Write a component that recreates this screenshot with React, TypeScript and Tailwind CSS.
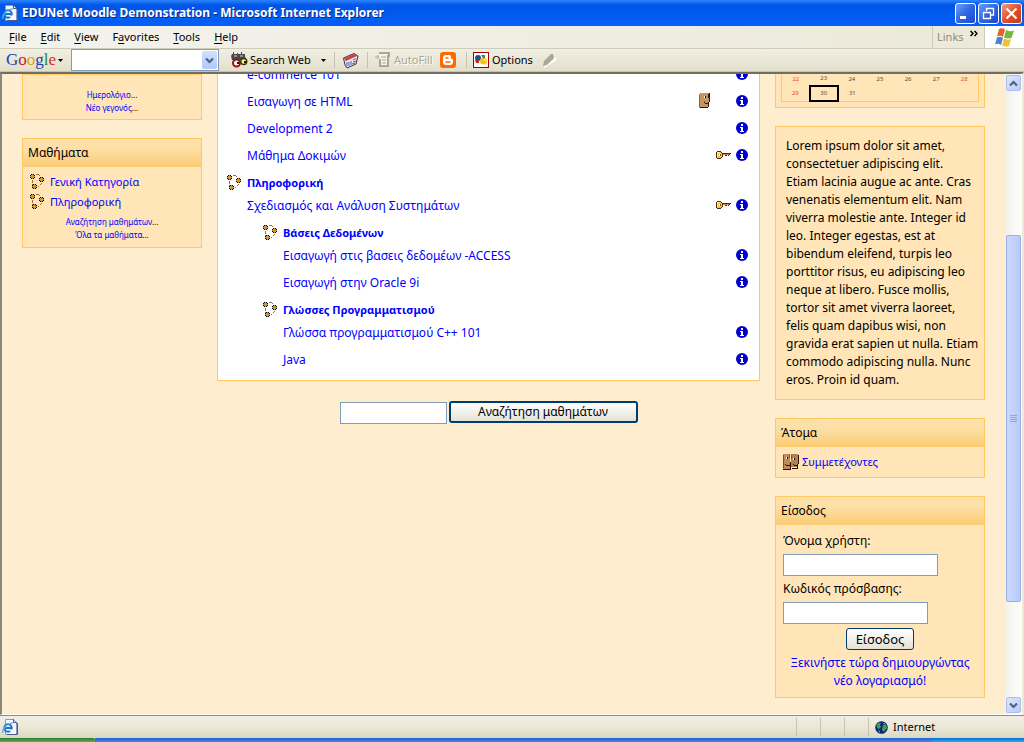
import React from "react";

const INFO = "i";
const KEY = "k";
const FACE = "f";

type Row = { title: string; level: number; category?: boolean; marks?: string };

const rows: Row[] = [
  { title: "e-commerce 101", level: 0, marks: INFO },
  { title: "Εισαγωγη σε HTML", level: 0, marks: FACE + INFO },
  { title: "Development 2", level: 0, marks: INFO },
  { title: "Μάθημα Δοκιμών", level: 0, marks: KEY + INFO },
  { title: "Πληροφορική", level: 0, category: true },
  { title: "Σχεδιασμός και Ανάλυση Συστημάτων", level: 0, marks: KEY + INFO },
  { title: "Βάσεις Δεδομένων", level: 1, category: true },
  { title: "Εισαγωγή στις βασεις δεδομέων -ACCESS", level: 1, marks: INFO },
  { title: "Εισαγωγή στην Oracle 9i", level: 1, marks: INFO },
  { title: "Γλώσσες Προγραμματισμού", level: 1, category: true },
  { title: "Γλώσσα προγραμματισμού C++ 101", level: 1, marks: INFO },
  { title: "Java", level: 1, marks: INFO },
];

const weeks = [
  ["22", "23", "24", "25", "26", "27", "28"],
  ["29", "30", "31", "", "", "", ""],
];

const intro = [
  "Lorem ipsum dolor sit amet,",
  "consectetuer adipiscing elit.",
  "Etiam lacinia augue ac ante. Cras",
  "venenatis elementum elit. Nam",
  "viverra molestie ante. Integer id",
  "leo. Integer egestas, est at",
  "bibendum eleifend, turpis leo",
  "porttitor risus, eu adipiscing leo",
  "neque at libero. Fusce mollis,",
  "tortor sit amet viverra laoreet,",
  "felis quam dapibus wisi, non",
  "gravida erat sapien ut nulla. Etiam",
  "commodo adipiscing nulla. Nunc",
  "eros. Proin id quam.",
].join("\n");

function CategoryIcon() {
  return (
    <svg width="16" height="16" viewBox="0 0 16 16" className="shrink-0" shapeRendering="crispEdges" aria-hidden="true">
      <path d="M6 0h3v1H6zM9 1h1v1H9zM2 6h1v3H2zM2 10h1v1H2zM11 9h1v1h-1zM10 10h1v1h-1zM8 12h1v1H8z" fill="#a06c3c" />
      {["translate(0 0)", "translate(9 3)", "translate(2 10)"].map((at) => (
        <g key={at} transform={at}>
          <path d="M1 0h3v1h1v3H4v1H1V4H0V1h1z" fill="#c8963c" />
          <path d="M1 0h1v1H1zM3 0h1v1H3zM0 1h1v1H0zM4 1h1v1H4zM0 3h1v1H0zM4 3h1v1H4zM1 4h1v1H1zM3 4h1v1H3z" fill="#000" />
        </g>
      ))}
    </svg>
  );
}

function InfoIcon() {
  return (
    <svg width="12" height="12" viewBox="0 0 12 12" aria-hidden="true">
      <circle cx="6" cy="6" r="6" fill="#0000cc" />
      <path d="M5 2h2v2H5zM4 5h3v4h1v1H4V9h1V6H4z" fill="#fff" />
    </svg>
  );
}

function KeyIcon() {
  return (
    <svg width="16" height="10" viewBox="0 0 16 10" shapeRendering="crispEdges" aria-hidden="true">
      <path d="M1 1h4v1h1v1h9v1h-1v1h-1v1h-1V5h-1v1H9V5H7v2H6v1H5v1H1V8H0V2h1z" fill="#4a2c0c" />
      <path d="M1 2h4v1h1v4H5v1H1z" fill="#edc052" />
      <path d="M1 2h3v1H1zM1 3h1v4H1z" fill="#fff0a8" />
      <path d="M3 4h1v2H3z" fill="#fff" />
      <path d="M4 4h1v2H4z" fill="#8a5a18" />
      <path d="M7 4h6v1H7z" fill="#c98648" />
    </svg>
  );
}

function FaceIcon() {
  return (
    <svg width="11" height="16" viewBox="0 0 11 16" shapeRendering="crispEdges" aria-hidden="true">
      <path d="M0 1h1V0h9v1h-1v4h1v4H9v5H8v1H0z" fill="#c99463" />
      <path d="M9 1h1v4H9zM10 0h1v9h-1zM9 9h1v5H9zM1 14h8v1H1zM5 9h1v1H5zM6 10h3v1H6z" fill="#2d180a" />
      <path d="M0 2h1v12H0zM5 8h1v1H5z" fill="#93623a" />
      <path d="M5 3h1v2H5z" fill="#fff" />
      <path d="M6 3h1v2H6z" fill="#000" />
    </svg>
  );
}

function PeopleIcon() {
  return (
    <svg width="16" height="16" viewBox="0 0 16 16" className="shrink-0" shapeRendering="crispEdges" aria-hidden="true">
      <path d="M0 0h7v15H0z" fill="#c08b5c" />
      <path d="M8 0h7v13H8z" fill="#b67f50" />
      <path d="M0 1h1v13H0zM6 0h1v4H6zM8 1h1v4H8z" fill="#7c4e2a" />
      <path d="M7 8h1v8H7zM15 1h1v9h-1zM14 10h1v5h-1zM9 14h5v1H9zM0 15h7v1H0zM3 11h4v1H3zM2 10h1v1H2zM10 10h1v1h-1zM11 11h3v1h-3z" fill="#281408" />
      <path d="M3 3h1v2H3zM10 4h1v2h-1z" fill="#fff" />
      <path d="M4 3h1v2H4zM11 4h1v2h-1z" fill="#000" />
    </svg>
  );
}

function IePageIcon() {
  return (
    <svg width="16" height="16" viewBox="0 0 16 16" className="shrink-0" aria-hidden="true">
      <path d="M3.500.5h8l3 3v12h-11z" fill="#f4f6ff" stroke="#8c99bd" />
      <path d="M11.500 0v3.500H15M15.500 4v11.500H5" fill="none" stroke="#4c587e" />
      <circle cx="6" cy="9" r="3.700" fill="none" stroke="#1673cc" strokeWidth="2" />
      <path d="M3 9h7" stroke="#1673cc" strokeWidth="2" />
      <path d="M7.500 10.500h3.500v2H8z" fill="#eef3ff" />
      <path d="M1 14C-.5 10 6 3.500 11 4" fill="none" stroke="#57b4ef" strokeWidth="1.300" />
    </svg>
  );
}

function Binoculars() {
  return (
    <svg width="17" height="16" viewBox="0 0 17 16" aria-hidden="true">
      <path d="M1 2h1V0h1v2h3V1h1v1h3V0h1v2h3v2l1 4H1L0 4z" fill="#4a4a4a" />
      <path d="M3 3h3v2H3zM9 3h3v2H9z" fill="#909090" />
      <circle cx="5.500" cy="11" r="3.500" fill="#fff" stroke="#a90c0c" strokeWidth="2" />
      <circle cx="12.800" cy="9.500" r="3" fill="#fff4a0" stroke="#3d3800" strokeWidth="1.400" />
      <path d="M6 10h2v2H6zM13 9h2v2h-2z" fill="#111" />
    </svg>
  );
}

function NewsIcon() {
  return (
    <svg width="18" height="17" viewBox="0 0 18 17" aria-hidden="true">
      <path d="M1.500 6L12 1.500 16 4l-2 8-9 4-2-3z" fill="#e9e5ef" stroke="#33305c" />
      <path d="M2 6.500l10-4.500 3 2-11 5z" fill="#cf4038" />
      <path d="M5 10v4M7 10v4M9 9v4" stroke="#4161bd" />
      <path d="M11 8l3-1.500M11 10l3-1M10 12l3-1" stroke="#b74841" />
    </svg>
  );
}

function AutoFillIcon() {
  return (
    <svg width="17" height="16" viewBox="0 0 17 16" aria-hidden="true">
      <path d="M4 1h10v3h-1v10H5V7" fill="#f6f4e8" stroke="#aaa797" strokeWidth="2" />
      <path d="M6 5h5M7 8h4M7 11h4M0 5h4M2 3l2 2-2 2" fill="none" stroke="#aaa797" />
    </svg>
  );
}

function BloggerIcon() {
  return (
    <svg width="16" height="16" viewBox="0 0 16 16" aria-hidden="true">
      <rect width="16" height="16" rx="3" fill="#ff6a00" />
      <path d="M6 3h3q2 0 2 2v1.500q2 0 2 1.500v2q0 3-3 3H6q-3 0-3-3V6q0-3 3-3z" fill="#fff" />
      <path d="M6 6h2M6 10h4" stroke="#ff6a00" strokeWidth="1.500" strokeLinecap="round" />
    </svg>
  );
}

function OptionsIcon() {
  return (
    <svg width="16" height="16" viewBox="0 0 16 16" aria-hidden="true">
      <rect x=".5" y=".5" width="15" height="15" fill="#fff" stroke="#a50000" />
      <circle cx="5" cy="6" r="3" fill="#1d4f9f" />
      <circle cx="10.500" cy="9" r="3.500" fill="#f5c21c" />
      <path d="M2 8h4v3H3z" fill="#c42a1c" />
      <path d="M8 3h4v3h-2z" fill="#3e7e62" />
      <circle cx="12" cy="8" r="1" fill="#fff0a0" />
    </svg>
  );
}

function PencilIcon() {
  return (
    <svg width="14" height="15" viewBox="0 0 14 15" aria-hidden="true">
      <path d="M2 14l11-7V4" fill="none" stroke="#fff" strokeWidth="2" />
      <path d="M1 13l1-5 7-7h2l1 4-7 7z" fill="#aaa797" />
    </svg>
  );
}

function WindowsFlag() {
  return (
    <svg width="20" height="19" viewBox="0 0 20 19" aria-hidden="true">
      <path d="M4 1q3-1.500 6 .5L8 9Q5 7 2 8.500z" fill="#e8602c" />
      <path d="M11 2q3 2 8 .5L16.500 10Q13 11 9 9.500z" fill="#74b843" />
      <path d="M2 9.500q3-1.500 6 .5l-2 7q-3-2-6-.5z" fill="#4584d4" />
      <path d="M9 10.500q4 2 7 .5L14 18q-3 1.500-7-.5z" fill="#f6c12e" />
    </svg>
  );
}

function Globe() {
  return (
    <svg width="13" height="13" viewBox="0 0 13 13" aria-hidden="true">
      <circle cx="6.500" cy="6.500" r="6.300" fill="#10207e" />
      <path d="M1.500 3.500L4 1.500l2 .5-1 2 1 2-2 2-2-1zM8 4l3-1 1 4-3 4-2-2z" fill="#35a83a" />
      <path d="M3 9l2 1v1.500H4zM8 2h2v1H8z" fill="#4f8ff0" />
    </svg>
  );
}

function Chevron({ up = false }: { up?: boolean }) {
  return (
    <svg width="9" height="7" viewBox="0 0 9 7" aria-hidden="true">
      <path d={up ? "M1 5.500l3.500-3.500L8 5.500" : "M1 1.500L4.500 5 8 1.500"} fill="none" stroke="#4d6185" strokeWidth="2.200" />
    </svg>
  );
}

function Triangle() {
  return (
    <svg width="5" height="3" viewBox="0 0 5 3" aria-hidden="true">
      <path d="M0 0h5L2.500 3z" fill="#000" />
    </svg>
  );
}

function Separator() {
  return <span className="h-4 w-px bg-[#c5c2b0]" />;
}

function CaptionButton({ label, close, children }: { label: string; close?: boolean; children: React.ReactNode }) {
  return (
    <button
      aria-label={label}
      className={
        "flex size-[21px] items-center justify-center rounded-[3px] border border-white bg-linear-to-br " +
        (close ? "from-[#f09a7c] via-[#e0512c] to-[#c43a12]" : "from-[#6f9df5] via-[#2f66e4] to-[#1c49c8]")
      }
    >
      <svg width="15" height="15" viewBox="0 0 15 15" stroke="#fff" fill="none" className="shrink-0" aria-hidden="true">
        {children}
      </svg>
    </button>
  );
}

function Block({ title, children }: { title?: string; children: React.ReactNode }) {
  return (
    <section className="border border-[#ffc862] bg-[#ffe5b7]">
      {title && (
        <h2 className="h-7 bg-linear-to-b from-[#fde0a8] from-30% to-[#fbcc72] px-[5px] leading-7 font-normal">{title}</h2>
      )}
      {children}
    </section>
  );
}

const mainMenu = [
  ["", "F", "ile"],
  ["", "E", "dit"],
  ["", "V", "iew"],
  ["F", "a", "vorites"],
  ["", "T", "ools"],
  ["", "H", "elp"],
];

const logo = [
  ["G", "text-[#1a3fae]"],
  ["o", "text-[#c4201c]"],
  ["o", "text-[#dba514]"],
  ["g", "text-[#1a3fae]"],
  ["l", "text-[#1c8a2c]"],
  ["e", "text-[#d3321f]"],
];

function Chrome() {
  return (
    <header className="shrink-0 font-['Noto_Sans',sans-serif] text-[11px]">
      <div className="flex h-[26px] items-center bg-linear-to-b from-[#2b84ff] via-[#0055e5] via-20% to-[#0460fb] pr-0.5 pl-0.5">
        <IePageIcon />
        <h1 className="ml-1 flex-1 text-[12px] font-bold whitespace-nowrap text-white [text-shadow:1px_1px_#0a2a86]">
          EDUNet Moodle Demonstration - Microsoft Internet Explorer
        </h1>
        <div className="flex gap-0.5">
          <CaptionButton label="Minimize">
            <path d="M2 11.500h6" strokeWidth="3" />
          </CaptionButton>
          <CaptionButton label="Restore">
            <path d="M5.500 5V2.500h7V9H10M2.500 6.500h7v6h-7zM5 2.500h8M2 6.500h8" strokeWidth="1.300" />
          </CaptionButton>
          <CaptionButton label="Close" close>
            <path d="M2.500 2.500l10 10M12.500 2.500l-10 10" strokeWidth="2.200" />
          </CaptionButton>
        </div>
      </div>
      <div className="flex h-[23px] items-stretch border-b border-[#cfccba] bg-linear-to-r from-[#f3f3ee] to-[#ece9d8]">
        <nav className="flex flex-1 items-center gap-3.5 pl-[9px]">
          {mainMenu.map(([before, key, after]) => (
            <button key={key}>
              {before}
              <span className="underline underline-offset-2">{key}</span>
              {after}
            </button>
          ))}
        </nav>
        <div className="flex w-[52px] justify-between border-l border-[#cfccba] pr-1.5 pl-1">
          <span className="self-center text-[#8b897c]">Links</span>
          <button aria-label="More links" className="self-start pt-1">
            <svg width="8" height="7" viewBox="0 0 8 7" fill="none" stroke="#000" strokeWidth="1.500" aria-hidden="true">
              <path d="M.5 1L3 3.500.5 6M4.500 1L7 3.500 4.500 6" />
            </svg>
          </button>
        </div>
        <div className="flex w-10 items-center justify-center border-l border-[#cfccba] bg-white">
          <WindowsFlag />
        </div>
      </div>
      <div className="flex h-[23px] items-center border-b border-[#c5c2b0] bg-linear-to-b from-[#f1efe4] to-[#e3dfcb] pl-1.5">
        <button className="flex w-[65px] items-center gap-0.5">
          <span className="font-['Liberation_Serif',serif] text-[17px] leading-5">
            {logo.map(([letter, colour], i) => (
              <span key={i} className={colour}>
                {letter}
              </span>
            ))}
          </span>
          <Triangle />
        </button>
        <div className="flex h-[22px] w-[148px] border border-[#7f9db9] bg-white p-px">
          <input aria-label="Google search" className="min-w-0 flex-1 outline-none" />
          <button aria-label="Search history" className="flex w-[15px] items-center justify-center rounded-xs bg-linear-to-b from-[#d3e0fd] to-[#b4c8f6]">
            <Chevron />
          </button>
        </div>
        <button className="ml-3 flex w-[95px] items-center gap-0.5 whitespace-nowrap">
          <Binoculars />
          <span className="flex-1 text-left">Search Web</span>
          <Triangle />
        </button>
        <div className="ml-2 flex items-center gap-[7px]">
          <Separator />
          <button aria-label="News">
            <NewsIcon />
          </button>
          <Separator />
        </div>
        <button className="ml-[7px] flex w-[65px] items-center gap-0.5 text-[#aaa797] [text-shadow:1px_1px_#fff]" disabled>
          <AutoFillIcon />
          AutoFill
        </button>
        <button aria-label="Blogger" className="mr-2.5 w-4">
          <BloggerIcon />
        </button>
        <Separator />
        <button className="ml-1.5 flex w-[69px] items-center gap-[3px]">
          <OptionsIcon />
          Options
        </button>
        <button aria-label="Highlight" disabled>
          <PencilIcon />
        </button>
      </div>
    </header>
  );
}

function LeftColumn() {
  return (
    <aside className="flex w-[180px] shrink-0 flex-col gap-[18px]">
      <Block>
        <div className="pt-[13px] pb-[5px] text-center text-[8px] leading-[13px]">
          <p><a href="#calendar" className="text-[#0000ff]">Ημερολόγιο</a>...</p>
          <p><a href="#event" className="text-[#0000ff]">Νέο γεγονός</a>...</p>
        </div>
      </Block>
      <Block title="Μαθήματα">
        <ul className="px-[7px] pt-[5px] text-[11px] leading-5">
          {["Γενική Κατηγορία", "Πληροφορική"].map((name) => (
            <li key={name} className="flex items-center gap-1">
              <CategoryIcon />
              <a href="#category" className="text-[#0000ff]">{name}</a>
            </li>
          ))}
        </ul>
        <div className="pt-[3px] pb-1.5 text-center text-[8px] leading-[13px]">
          <p><a href="#search" className="text-[#0000ff]">Αναζήτηση μαθημάτων</a>...</p>
          <p><a href="#all" className="text-[#0000ff]">Όλα τα μαθήματα</a>...</p>
        </div>
      </Block>
    </aside>
  );
}

function CourseRow({ title, level, category, marks = "" }: Row) {
  const indent = level ? "pl-[45px]" : "pl-[9px]";
  return (
    <li className={"flex items-start pr-[11px] leading-[18px] " + indent + (category ? " h-[23px]" : " h-[27px]")}>
      <span className="flex w-5 shrink-0 pt-px">{category && <CategoryIcon />}</span>
      <a href="#course" className={"flex-1 text-[#0000ff]" + (category ? " text-[11px] font-bold" : "")}>{title}</a>
      <span className="flex h-4 items-center">
        {marks.includes(FACE) && <span className="w-[37px]"><FaceIcon /></span>}
        {marks.includes(KEY) && <span className="w-5"><KeyIcon /></span>}
        {marks.includes(INFO) && <InfoIcon />}
      </span>
    </li>
  );
}

const xpInput = "h-[22px] border border-[#7f9db9] bg-white px-1 outline-none";
const xpButton = "h-[22px] rounded-[3px] bg-linear-to-b from-white to-[#e4e2d6] border-[#003c74]";

function MainColumn() {
  return (
    <main className="min-w-0 flex-1">
      <ul className="-mt-2 border border-t-0 border-[#ffc862] bg-white pb-0.5">
        {rows.map((row) => (
          <CourseRow key={row.title} {...row} />
        ))}
      </ul>
      <form className="flex justify-center gap-0.5 pt-5" onSubmit={(e) => e.preventDefault()}>
        <input aria-label="Αναζήτηση" className={xpInput + " mt-px w-[107px]"} />
        <button className={xpButton + " w-[189px] border-2 text-[12px] leading-4"}>Αναζήτηση μαθημάτων</button>
      </form>
    </main>
  );
}

function RightColumn() {
  return (
    <aside className="-mt-[3px] flex w-[210px] shrink-0 flex-col gap-[18px]">
      <Block>
        <div className="px-[5px] pb-[5px]">
          <table className="w-full table-fixed border-collapse border border-t-0 border-[#ffc862] text-center text-[6px] leading-[13px] text-[#5a5040]">
            <tbody>
              {weeks.map((week, w) => (
                <tr key={w} className="h-[14px]">
                  {week.map((day, d) => (
                    <td
                      key={d}
                      className={
                        "p-0 " +
                        (day === "30" ? "border-2 border-black" : d === 0 || d === 6 ? "text-[#f04a38]" : "")
                      }
                    >
                      {day}
                    </td>
                  ))}
                </tr>
              ))}
            </tbody>
          </table>
        </div>
      </Block>
      <Block>
        <p className="py-2.5 pl-2.5 leading-[18px] whitespace-pre">{intro}</p>
      </Block>
      <Block title="Άτομα">
        <p className="flex h-[30px] items-center gap-[3px] px-[7px] text-[11px]">
          <PeopleIcon />
          <a href="#people" className="text-[#0000ff]">Συμμετέχοντες</a>
        </p>
      </Block>
      <Block title="Είσοδος">
        <form className="px-[7px] pt-[7px] pb-[7px] leading-[18px]" onSubmit={(e) => e.preventDefault()}>
          <label htmlFor="user" className="block">Όνομα χρήστη:</label>
          <input id="user" className={xpInput + " mt-1 block w-[155px]"} />
          <label htmlFor="pass" className="mt-1 block">Κωδικός πρόσβασης:</label>
          <input id="pass" type="password" className={xpInput + " mt-1 block w-[145px]"} />
          <button className={xpButton + " mx-auto mt-1 mb-1 block w-[68px] border text-[13px] leading-5"}>Είσοδος</button>
          <p className="text-center">
            <a href="#signup" className="text-[#0000ff]">Ξεκινήστε τώρα δημιουργώντας νέο λογαριασμό!</a>
          </p>
        </form>
      </Block>
    </aside>
  );
}

function ScrollBar() {
  return (
    <div className="flex w-[17px] shrink-0 flex-col bg-linear-to-r from-[#f1f1ec] to-[#fefefb] p-px">
      <button aria-label="Scroll up" className="flex h-4 shrink-0 items-center justify-center rounded-xs border border-[#a9bdf0] bg-linear-to-br from-[#dde7fe] to-[#b9cbf8]">
        <Chevron up />
      </button>
      <div className="flex-[144]" />
      <div className="flex flex-[366] flex-col items-center justify-center gap-px rounded-xs border border-[#98b1e4] bg-linear-to-r from-[#cad9fe] to-[#b9cbfa]">
        {[0, 1, 2, 3].map((n) => (
          <span key={n} className="h-px w-[7px] bg-[#8ba6e8]" />
        ))}
      </div>
      <div className="flex-[95]" />
      <button aria-label="Scroll down" className="flex h-4 shrink-0 items-center justify-center rounded-xs border border-[#a9bdf0] bg-linear-to-br from-[#dde7fe] to-[#b9cbf8]">
        <Chevron />
      </button>
    </div>
  );
}

function StatusBar() {
  return (
    <footer className="shrink-0 font-['Noto_Sans',sans-serif] text-[11px]">
      <div className="flex h-[23px] items-stretch border-t border-[#8f8d80] bg-linear-to-b from-[#f1efe4] via-[#ebe8d7] to-[#dcd8c2]">
        <span className="flex flex-1 items-center pl-0.5"><IePageIcon /></span>
        <span className="my-0.5 w-6 border-l border-[#c5c2b0]" />
        <span className="my-0.5 w-6 border-l border-[#c5c2b0]" />
        <span className="my-0.5 w-6 border-l border-[#c5c2b0]" />
        <span className="my-0.5 flex w-[156px] items-center gap-[5px] border-l border-[#c5c2b0] pl-1.5">
          <Globe />
          Internet
        </span>
      </div>
      <div className="flex h-1">
        <span className="w-[95px] rounded-tr-xs bg-linear-to-b from-[#2c7a2c] to-[#5eae58]" />
        <span className="flex-1 bg-linear-to-b from-[#2a5fd0] to-[#3f87ee]" />
        <span className="w-[92px] bg-linear-to-b from-[#0f6fc8] to-[#18b0f4]" />
      </div>
    </footer>
  );
}

export default function App() {
  return (
    <div className="flex h-screen flex-col overflow-hidden bg-[#ece9d8] font-['Noto_Sans',sans-serif] text-black">
      <Chrome />
      <div className="flex min-h-0 flex-1 border-t-2 border-r-2 border-b border-l-2 border-t-[#716f64] border-r-[#ece9d8] border-b-white border-l-[#8a887a] bg-[#ffedcf] text-[12px]">
        <div className="flex min-w-0 flex-1 items-start gap-[15px] overflow-hidden pr-5 pl-5">
          <LeftColumn />
          <MainColumn />
          <RightColumn />
        </div>
        <ScrollBar />
      </div>
      <StatusBar />
    </div>
  );
}
